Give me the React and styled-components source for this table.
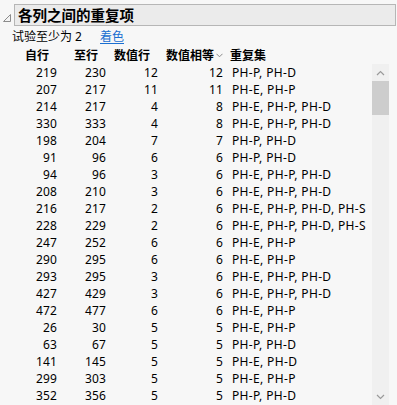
import React from "react";
import styled, { createGlobalStyle } from "styled-components";

const Global = createGlobalStyle`
  html, body {
    margin: 0;
    padding: 0;
    background: #f7f7f7;
    overflow: hidden;
  }
  body {
    font-family: "Noto Sans", "Noto Sans CJK SC", sans-serif;
    font-size: 12px;
    color: #000;
  }
`;

const Page = styled.div`
  width: 397px;
  height: 405px;
  overflow: hidden;
  display: flex;
  flex-direction: column;
`;

const TitleRow = styled.div`
  display: flex;
  align-items: flex-end;
  padding: 4px 1px 0 3px;
  gap: 3px;
`;

const Disclosure = styled.svg`
  width: 8px;
  height: 8px;
  margin-bottom: 4px;
  flex: none;
`;

const TitleBox = styled.div`
  flex: 1;
  height: 20px;
  border: 1px solid #b6b6b6;
  background: #ebebeb;
  display: flex;
  align-items: center;
  padding-left: 3px;
  font-family: "Noto Sans CJK SC", sans-serif;
  font-weight: bold;
  font-size: 14.5px;
  line-height: 20px;
`;

const Options = styled.div`
  display: flex;
  align-items: center;
  height: 18px;
  margin-top: 1px;
  padding-left: 12px;
  gap: 18px;
`;

const LinkText = styled.span`
  color: #1a6fd1;
  text-decoration: underline;
  text-underline-offset: 2px;
`;

const Grid = styled.div`
  display: grid;
  grid-template-columns: 57px 49px 52px 65px 1fr;
  align-items: center;
`;

const HeadRow = styled(Grid)`
  height: 18px;
  font-family: "Noto Sans CJK SC", sans-serif;
  font-weight: bold;
`;

const HeadCell = styled.div`
  padding-right: ${(p) => (p.sorted ? 0 : 8)}px;
  white-space: nowrap;
  display: flex;
  justify-content: flex-end;
  align-items: center;
  gap: 2px;
  &:last-child {
    justify-content: flex-start;
    padding-left: 7px;
    padding-right: 0;
  }
`;

const SortMark = styled.svg`
  margin-top: 3px;
`;

const Body = styled.div`
  display: flex;
  flex: 1;
  min-height: 0;
  margin-top: 1px;
`;

const Rows = styled.div`
  flex: 1;
  overflow: hidden;
`;

const Row = styled(Grid)`
  height: 17px;
  line-height: 17px;
`;

const Num = styled.div`
  text-align: right;
  letter-spacing: 0.1px;
`;

const SetCell = styled.div`
  padding-left: 9px;
  white-space: nowrap;
  letter-spacing: 0.35px;
`;

const Scrollbar = styled.div`
  width: 17px;
  margin-right: 8px;
  margin-left: 6px;
  height: 341px;
  background: #f0f0f0;
  display: flex;
  flex-direction: column;
`;

const Arrow = styled.div`
  height: 17px;
  display: flex;
  align-items: center;
  justify-content: center;
`;

const Track = styled.div`
  flex: 1;
`;

const Thumb = styled.div`
  height: 34px;
  background: #cdcdcd;
`;

const rows = [
  [219, 230, 12, 12, "PH-P, PH-D"],
  [207, 217, 11, 11, "PH-E, PH-P"],
  [214, 217, 4, 8, "PH-E, PH-P, PH-D"],
  [330, 333, 4, 8, "PH-E, PH-P, PH-D"],
  [198, 204, 7, 7, "PH-P, PH-D"],
  [91, 96, 6, 6, "PH-P, PH-D"],
  [94, 96, 3, 6, "PH-E, PH-P, PH-D"],
  [208, 210, 3, 6, "PH-E, PH-P, PH-D"],
  [216, 217, 2, 6, "PH-E, PH-P, PH-D, PH-S"],
  [228, 229, 2, 6, "PH-E, PH-P, PH-D, PH-S"],
  [247, 252, 6, 6, "PH-E, PH-P"],
  [290, 295, 6, 6, "PH-E, PH-P"],
  [293, 295, 3, 6, "PH-E, PH-P, PH-D"],
  [427, 429, 3, 6, "PH-E, PH-P, PH-D"],
  [472, 477, 6, 6, "PH-E, PH-P"],
  [26, 30, 5, 5, "PH-E, PH-P"],
  [63, 67, 5, 5, "PH-P, PH-D"],
  [141, 145, 5, 5, "PH-E, PH-D"],
  [299, 303, 5, 5, "PH-E, PH-P"],
  [352, 356, 5, 5, "PH-P, PH-D"],
];

const Chevron = ({ up }) => (
  <svg width="9" height="6" viewBox="0 0 9 6">
    <polyline
      points={up ? "1,5 4.5,1.5 8,5" : "1,1 4.5,4.5 8,1"}
      fill="none"
      stroke="#9a9a9a"
      strokeWidth="1.2"
    />
  </svg>
);

export default function App() {
  return (
    <Page>
      <Global />
      <TitleRow>
        <Disclosure viewBox="0 0 8 8">
          <polygon points="7.5,0.5 7.5,7.5 0.5,7.5" fill="#f4f4f4" stroke="#8c8c8c" strokeWidth="1" />
        </Disclosure>
        <TitleBox>各列之间的重复项</TitleBox>
      </TitleRow>
      <Options>
        <span>试验至少为 2</span>
        <LinkText>着色</LinkText>
      </Options>
      <HeadRow>
        <HeadCell>自行</HeadCell>
        <HeadCell>至行</HeadCell>
        <HeadCell>数值行</HeadCell>
        <HeadCell sorted>
          数值相等
          <SortMark width="7" height="5" viewBox="0 0 7 5">
            <polyline points="0.5,0.8 3.5,3.8 6.5,0.8" fill="none" stroke="#8a8a8a" strokeWidth="1" />
          </SortMark>
        </HeadCell>
        <HeadCell>重复集</HeadCell>
      </HeadRow>
      <Body>
        <Rows>
          {rows.map((r, i) => (
            <Row key={i}>
              <Num>{r[0]}</Num>
              <Num>{r[1]}</Num>
              <Num>{r[2]}</Num>
              <Num>{r[3]}</Num>
              <SetCell>{r[4]}</SetCell>
            </Row>
          ))}
        </Rows>
        <Scrollbar>
          <Arrow>
            <Chevron up />
          </Arrow>
          <Track>
            <Thumb />
          </Track>
          <Arrow>
            <Chevron />
          </Arrow>
        </Scrollbar>
      </Body>
    </Page>
  );
}
